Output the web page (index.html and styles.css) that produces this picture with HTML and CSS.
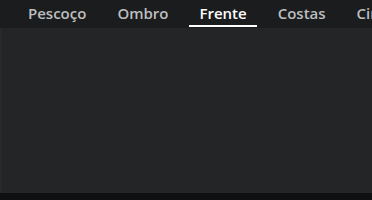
FILE: index.html
```html
<!DOCTYPE html>
<html>
<head>
<meta charset="utf-8">
<link rel="stylesheet" href="styles.css">
</head>
<body>
<div class="app">
  <nav class="tabs">
    <div class="tab">Pescoço</div>
    <div class="tab">Ombro</div>
    <div class="tab active">Frente</div>
    <div class="tab">Costas</div>
    <div class="tab">Cintura</div>
  </nav>
  <main class="panel"></main>
  <footer class="bottom"></footer>
</div>
</body>
</html>
```
FILE: styles.css
```css
html, body {
  margin: 0;
  padding: 0;
  background: #0f1011;
}
.app {
  width: 372px;
  height: 200px;
  display: flex;
  flex-direction: column;
  overflow: hidden;
}
.tabs {
  height: 28px;
  flex: 0 0 28px;
  display: flex;
  align-items: flex-start;
  gap: 11px;
  padding-left: 18px;
  background: #1b1c1e;
  overflow: hidden;
  white-space: nowrap;
}
.tab {
  padding: 0 10px;
  height: 27px;
  box-sizing: border-box;
  font-family: "Open Sans", sans-serif;
  font-weight: 600;
  font-size: 15px;
  line-height: 26px;
  color: #bdbebf;
  border-bottom: 2px solid transparent;
}
.tab.active {
  color: #ffffff;
  border-bottom-color: #ffffff;
}
.panel {
  flex: 1;
  background: #232527;
  border-left: 2px solid #27292b;
}
.bottom {
  flex: 0 0 7px;
  background: #0f1011;
}
```
